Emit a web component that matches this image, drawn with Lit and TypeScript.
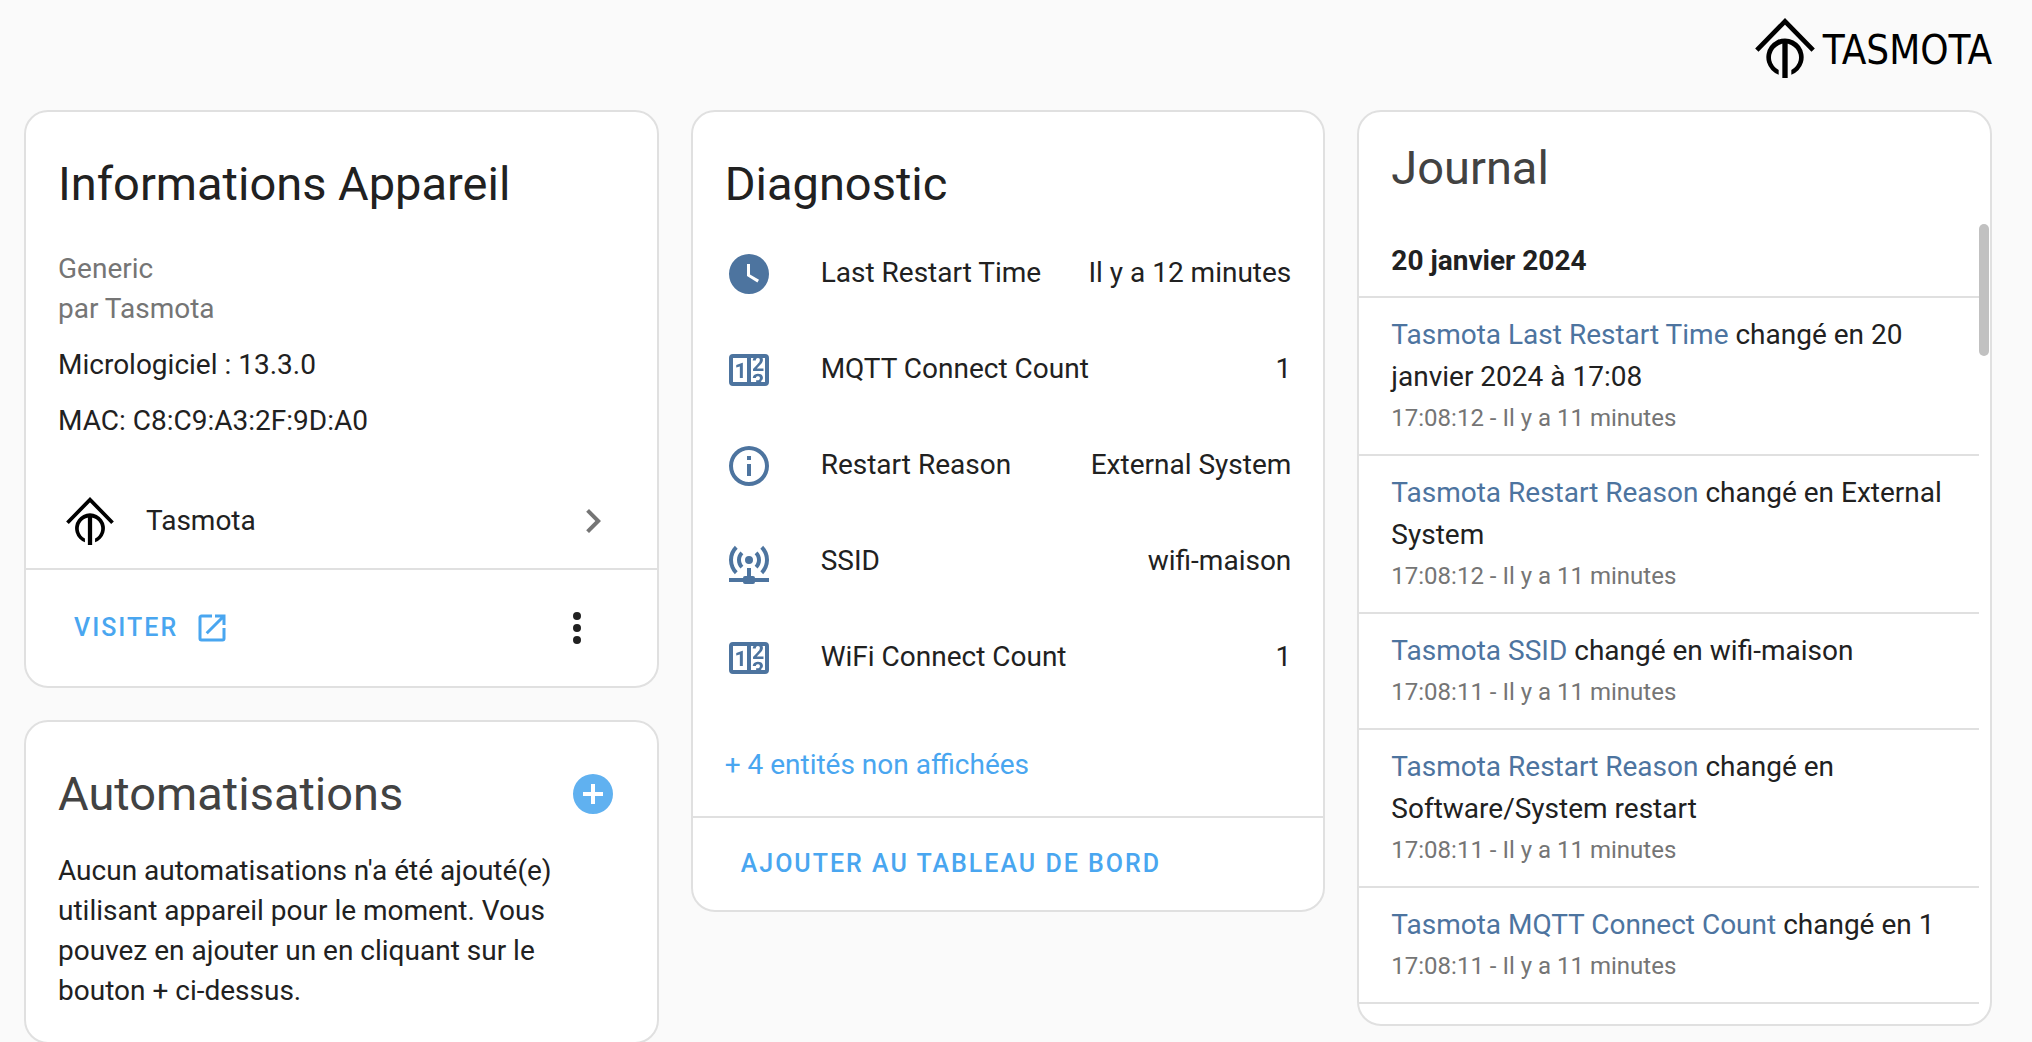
import { LitElement, html, css, svg } from "lit";
import { customElement, property } from "lit/decorators.js";

const ICONS = {
  clock:
    "M12,2A10,10 0 0,0 2,12A10,10 0 0,0 12,22A10,10 0 0,0 22,12A10,10 0 0,0 12,2M16.2,16.2L11,13V7H12.5V12.2L17,14.9L16.2,16.2Z",
  counter:
    "M4,4H20A2,2 0 0,1 22,6V18A2,2 0 0,1 20,20H4A2,2 0 0,1 2,18V6A2,2 0 0,1 4,4M4,6V18H11V6H4M20,18V6H18.76C19,6.54 18.95,7.07 18.95,7.13C18.88,7.8 18.41,8.5 18.24,8.75L15.91,11.3L19.23,11.28L19.24,12.5L14.04,12.47L14,11.47C14,11.47 17.05,8.24 17.2,7.95C17.34,7.67 17.91,6 16.5,6C15.27,6.05 15.41,7.3 15.41,7.3L13.87,7.31C13.87,7.31 13.88,6.65 14.25,6H13V18H15.58L15.57,17.14L16.54,17.13C16.54,17.13 17.45,16.97 17.46,16.08C17.5,15.08 16.65,15.08 16.5,15.08C16.37,15.08 15.43,15.13 15.43,15.95H13.91C13.91,15.95 13.95,13.89 16.5,13.89C19.1,13.89 18.96,15.91 18.96,15.91C18.96,15.91 19,17.16 17.85,17.63L18.37,18H20M8.92,16H7.42V10.2L5.62,10.76V9.53L8.76,8.41H8.92V16Z",
  info: "M11,9H13V7H11M12,20C7.59,20 4,16.41 4,12C4,7.59 7.59,4 12,4C16.41,4 20,7.59 20,12C20,16.41 16.41,20 12,20M12,2A10,10 0 0,0 2,12A10,10 0 0,0 12,22A10,10 0 0,0 22,12A10,10 0 0,0 12,2M11,17H13V11H11V17Z",
  accessPoint:
    "M4.93,3.93C3.12,5.74 2,8.24 2,11C2,13.76 3.12,16.26 4.93,18.07L6.34,16.66C4.89,15.22 4,13.22 4,11C4,8.79 4.89,6.78 6.34,5.34L4.93,3.93M19.07,3.93L17.66,5.34C19.11,6.78 20,8.79 20,11C20,13.22 19.11,15.22 17.66,16.66L19.07,18.07C20.88,16.26 22,13.76 22,11C22,8.24 20.88,5.74 19.07,3.93M7.76,6.76C6.67,7.85 6,9.35 6,11C6,12.65 6.67,14.15 7.76,15.24L9.17,13.83C8.45,13.11 8,12.11 8,11C8,9.89 8.45,8.89 9.17,8.17L7.76,6.76M16.24,6.76L14.83,8.17C15.55,8.89 16,9.89 16,11C16,12.11 15.55,13.11 14.83,13.83L16.24,15.24C17.33,14.15 18,12.65 18,11C18,9.35 17.33,7.85 16.24,6.76M12,9A2,2 0 0,0 10,11A2,2 0 0,0 12,13A2,2 0 0,0 14,11A2,2 0 0,0 12,9M11,15V19H10A1,1 0 0,0 9,20H2V22H9A1,1 0 0,0 10,23H14A1,1 0 0,0 15,22H22V20H15A1,1 0 0,0 14,19H13V15H11Z",
  chevronRight: "M8.59,16.58L13.17,12L8.59,7.41L10,6L16,12L10,18L8.59,16.58Z",
  openInNew:
    "M14,3V5H17.59L7.76,14.83L9.17,16.24L19,6.41V10H21V3M19,19H5V5H12V3H5C3.89,3 3,3.9 3,5V19A2,2 0 0,0 5,21H19A2,2 0 0,0 21,19V12H19V19Z",
  dotsVertical:
    "M12,16A2,2 0 0,1 14,18A2,2 0 0,1 12,20A2,2 0 0,1 10,18A2,2 0 0,1 12,16M12,10A2,2 0 0,1 14,12A2,2 0 0,1 12,14A2,2 0 0,1 10,12A2,2 0 0,1 12,10M12,4A2,2 0 0,1 14,6A2,2 0 0,1 12,8A2,2 0 0,1 10,6A2,2 0 0,1 12,4Z",
  plusCircle:
    "M17,13H13V17H11V13H7V11H11V7H13V11H17M12,2A10,10 0 0,0 2,12A10,10 0 0,0 12,22A10,10 0 0,0 22,12A10,10 0 0,0 12,2Z",
};

type IconName = keyof typeof ICONS;

interface Entity {
  icon: IconName;
  name: string;
  state: string;
}

interface LogEntry {
  entity: string;
  message: string;
  when: string;
}

const ENTITIES: Entity[] = [
  { icon: "clock", name: "Last Restart Time", state: "Il y a 12 minutes" },
  { icon: "counter", name: "MQTT Connect Count", state: "1" },
  { icon: "info", name: "Restart Reason", state: "External System" },
  { icon: "accessPoint", name: "SSID", state: "wifi-maison" },
  { icon: "counter", name: "WiFi Connect Count", state: "1" },
];

const LOG: LogEntry[] = [
  {
    entity: "Tasmota Last Restart Time",
    message: "changé en 20 janvier 2024 à 17:08",
    when: "17:08:12 - Il y a 11 minutes",
  },
  {
    entity: "Tasmota Restart Reason",
    message: "changé en External System",
    when: "17:08:12 - Il y a 11 minutes",
  },
  {
    entity: "Tasmota SSID",
    message: "changé en wifi-maison",
    when: "17:08:11 - Il y a 11 minutes",
  },
  {
    entity: "Tasmota Restart Reason",
    message: "changé en Software/System restart",
    when: "17:08:11 - Il y a 11 minutes",
  },
  {
    entity: "Tasmota MQTT Connect Count",
    message: "changé en 1",
    when: "17:08:11 - Il y a 11 minutes",
  },
];

@customElement("mdi-icon")
class MdiIcon extends LitElement {
  @property() name: IconName = "info";

  static styles = css`
    :host {
      display: block;
      flex: none;
      width: 48px;
      height: 48px;
    }
    .glyph {
      display: block;
      width: 100%;
      height: 100%;
      fill: currentColor;
    }
  `;

  render() {
    return html`<svg class="glyph" viewBox="0 0 24 24" aria-hidden="true">
      ${svg`<path d=${ICONS[this.name]}></path>`}
    </svg>`;
  }
}

@customElement("tasmota-mark")
class TasmotaMark extends LitElement {
  static styles = css`
    :host {
      display: block;
      flex: none;
      width: 48px;
      height: 48px;
    }
    .mark {
      display: block;
      width: 100%;
      height: 100%;
    }
    .roof {
      fill: none;
      stroke: #000;
      stroke-width: 14;
    }
  `;

  render() {
    return html`<svg class="mark" viewBox="0 0 178 180" aria-hidden="true">
      <path class="roof" d="M4.5 96.5L89 10L173.5 96.5" />
      <path
        d="M70 170A56 56 0 1 1 108 170V156A42 42 0 1 0 70 156Z"
      />
      <path d="M81 66H97V180H81Z" />
    </svg>`;
  }
}

@customElement("device-info-card")
class DeviceInfoCard extends LitElement {
  static styles = css`
    :host {
      display: block;
      box-sizing: border-box;
      background: #fff;
      border: 2px solid #e0e0e0;
      border-radius: 24px;
    }
    .title {
      margin: 0;
      padding: 24px 32px 17px;
      font-size: 47px;
      line-height: 96px;
      font-weight: 400;
    }
    .details {
      padding: 0 32px 32px;
    }
    .details p {
      margin: 0 0 16px;
    }
    .details p:last-child {
      margin-bottom: 0;
    }
    .details .model {
      color: #757575;
    }
    .integration {
      display: flex;
      align-items: center;
      gap: 32px;
      height: 95px;
      padding: 0 40px;
      color: inherit;
      text-decoration: none;
    }
    .integration-name {
      flex: 1;
    }
    .chevron {
      color: #757575;
    }
    .actions {
      display: flex;
      align-items: center;
      justify-content: space-between;
      height: 116px;
      padding: 0 56px 0 48px;
      border-top: 2px solid #e0e0e0;
    }
    .visit {
      display: flex;
      align-items: center;
      gap: 16px;
      color: #49a6f0;
      font-size: 25px;
      font-weight: 500;
      letter-spacing: 2px;
      text-decoration: none;
    }
    .visit-icon {
      width: 36px;
      height: 36px;
    }
    .menu {
      padding: 0;
      border: 0;
      background: none;
      color: inherit;
    }
  `;

  render() {
    return html`
      <h1 class="title">Informations Appareil</h1>
      <div class="details">
        <p class="model">Generic<br />par Tasmota</p>
        <p>Micrologiciel : 13.3.0</p>
        <p>MAC: C8:C9:A3:2F:9D:A0</p>
      </div>
      <a class="integration" href="#tasmota">
        <tasmota-mark></tasmota-mark>
        <span class="integration-name">Tasmota</span>
        <mdi-icon class="chevron" name="chevronRight"></mdi-icon>
      </a>
      <div class="actions">
        <a class="visit" href="#visiter">
          VISITER<mdi-icon class="visit-icon" name="openInNew"></mdi-icon>
        </a>
        <button class="menu" type="button" aria-label="Menu">
          <mdi-icon name="dotsVertical"></mdi-icon>
        </button>
      </div>
    `;
  }
}

@customElement("automations-card")
class AutomationsCard extends LitElement {
  static styles = css`
    :host {
      display: block;
      box-sizing: border-box;
      background: #fff;
      border: 2px solid #e0e0e0;
      border-radius: 24px;
    }
    .header {
      display: flex;
      align-items: center;
      justify-content: space-between;
      padding: 24px 40px 9px 32px;
    }
    .title {
      margin: 0;
      color: #424242;
      font-size: 47px;
      line-height: 96px;
      font-weight: 400;
    }
    .add {
      padding: 0;
      border: 0;
      background: none;
      color: #60b1f0;
    }
    .empty {
      margin: 0;
      padding: 0 40px 31px 32px;
    }
  `;

  render() {
    return html`
      <div class="header">
        <h1 class="title">Automatisations</h1>
        <button class="add" type="button" aria-label="Ajouter">
          <mdi-icon name="plusCircle"></mdi-icon>
        </button>
      </div>
      <p class="empty">
        Aucun automatisations n'a été ajouté(e) utilisant appareil pour le
        moment. Vous pouvez en ajouter un en cliquant sur le bouton + ci-dessus.
      </p>
    `;
  }
}

@customElement("diagnostic-card")
class DiagnosticCard extends LitElement {
  static styles = css`
    :host {
      display: block;
      box-sizing: border-box;
      background: #fff;
      border: 2px solid #e0e0e0;
      border-radius: 24px;
    }
    .title {
      margin: 0;
      padding: 24px 32px 1px;
      font-size: 47px;
      line-height: 96px;
      font-weight: 400;
    }
    .entities {
      display: flex;
      flex-direction: column;
      gap: 16px;
      margin: 0;
      padding: 0 32px;
      list-style: none;
    }
    .entity {
      display: flex;
      align-items: center;
      height: 80px;
    }
    .entity-icon {
      padding-top: 2px;
      margin-right: 48px;
      color: #4d749f;
    }
    .entity-name {
      flex: 1;
    }
    .more {
      display: block;
      margin: 48px 32px 31px;
      padding: 0;
      border: 0;
      background: none;
      color: #49a6f0;
      font: inherit;
    }
    .actions {
      display: flex;
      align-items: center;
      height: 92px;
      padding: 0 48px;
      border-top: 2px solid #e0e0e0;
    }
    .add {
      padding: 0;
      border: 0;
      background: none;
      color: #49a6f0;
      font: inherit;
      font-size: 25px;
      font-weight: 500;
      letter-spacing: 2px;
    }
  `;

  render() {
    return html`
      <h1 class="title">Diagnostic</h1>
      <ul class="entities">
        ${ENTITIES.map(
          (e) => html`<li class="entity">
            <mdi-icon class="entity-icon" name=${e.icon}></mdi-icon>
            <span class="entity-name">${e.name}</span>
            <span>${e.state}</span>
          </li>`
        )}
      </ul>
      <button class="more" type="button">+ 4 entités non affichées</button>
      <div class="actions">
        <button class="add" type="button">AJOUTER AU TABLEAU DE BORD</button>
      </div>
    `;
  }
}

@customElement("logbook-card")
class LogbookCard extends LitElement {
  static styles = css`
    :host {
      display: block;
      box-sizing: border-box;
      background: #fff;
      border: 2px solid #e0e0e0;
      border-radius: 24px;
    }
    .title {
      margin: 0;
      padding: 0 32px;
      color: #424242;
      font-size: 47px;
      line-height: 112px;
      font-weight: 400;
    }
    .log {
      display: grid;
      grid-template-columns: minmax(0, 1fr) 10px;
      padding-right: 1px;
    }
    .entries {
      padding-bottom: 20px;
    }
    .date {
      margin: 0;
      padding: 1px 32px 0;
      border-bottom: 2px solid #e0e0e0;
      font-size: 28px;
      line-height: 71px;
      font-weight: 700;
    }
    .entry {
      padding: 16px 32px;
      border-bottom: 2px solid #e0e0e0;
    }
    .message {
      margin: 0;
      line-height: 42px;
    }
    .entity {
      color: #4d749f;
      text-decoration: none;
    }
    .when {
      display: block;
      color: #757575;
      font-size: 24px;
      line-height: 40px;
    }
    .thumb {
      height: 132px;
      border-radius: 5px;
      background: #c1c1c1;
    }
  `;

  render() {
    return html`
      <h1 class="title">Journal</h1>
      <div class="log">
        <div class="entries">
          <h2 class="date">20 janvier 2024</h2>
          ${LOG.map(
            (e) => html`<div class="entry">
              <p class="message">
                <a class="entity" href="#entite">${e.entity}</a> ${e.message}
              </p>
              <span class="when">${e.when}</span>
            </div>`
          )}
        </div>
        <div class="thumb"></div>
      </div>
    `;
  }
}

@customElement("app-root")
class AppRoot extends LitElement {
  static styles = css`
    :host {
      display: block;
      box-sizing: border-box;
      height: 100vh;
      overflow-y: auto;
      scrollbar-width: none;
      padding: 0 40px 0 24px;
      background: #fafafa;
      color: #212121;
      font-family: Roboto, "Noto Sans", sans-serif;
      font-size: 28px;
      line-height: 40px;
    }
    .brand {
      display: flex;
      align-items: center;
      justify-content: flex-end;
      gap: 8px;
      height: 96px;
      padding-bottom: 14px;
    }
    .brand-mark {
      width: 60px;
      height: 60px;
    }
    .brand-name {
      padding-top: 4px;
      color: #000;
      font-family: "DejaVu Sans Condensed", "DejaVu Sans", sans-serif;
      font-size: 40px;
    }
    .columns {
      display: grid;
      grid-template-columns: repeat(3, minmax(0, 1fr));
      gap: 32px;
      align-items: start;
    }
    .column {
      display: grid;
      gap: 32px;
    }
  `;

  render() {
    return html`
      <header class="brand">
        <tasmota-mark class="brand-mark"></tasmota-mark>
        <span class="brand-name">TASMOTA</span>
      </header>
      <main class="columns">
        <div class="column">
          <device-info-card></device-info-card>
          <automations-card></automations-card>
        </div>
        <diagnostic-card></diagnostic-card>
        <logbook-card></logbook-card>
      </main>
    `;
  }
}
